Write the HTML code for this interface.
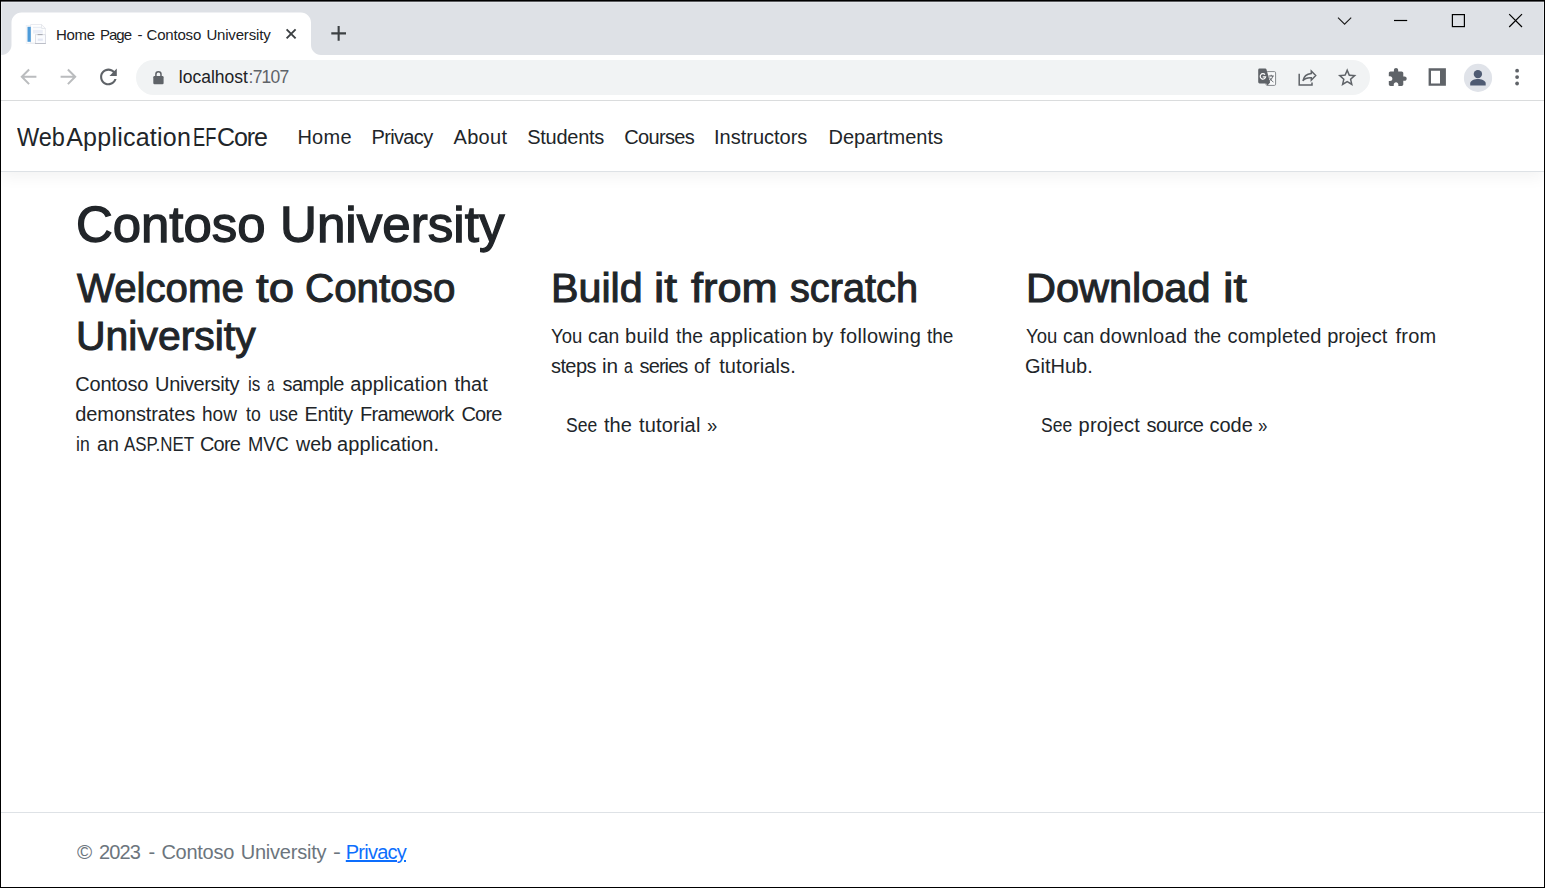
<!DOCTYPE html>
<html lang="en">
<head>
<meta charset="utf-8">
<title>Home Page - Contoso University</title>
<style>
html,body{margin:0;padding:0;}
body{width:1545px;height:888px;overflow:hidden;background:#fff;position:relative;font-family:"Liberation Sans",sans-serif;}
.abs{position:absolute;}
.t{position:absolute;white-space:nowrap;line-height:1;transform-origin:0 0;}
.H1{-webkit-text-stroke:1.3px #212529;}
.H2{-webkit-text-stroke:1px #212529;}
.U{text-decoration:underline;text-decoration-thickness:2px;text-underline-offset:1px;}
#frame{left:0;top:0;width:1545px;height:888px;box-sizing:border-box;border:1px solid #000;pointer-events:none;z-index:50;}
#top2{left:1px;top:1px;width:1543px;height:1px;background:#5b5c5f;z-index:51;}
#strip{left:1px;top:1px;width:1543px;height:54px;background:#dee1e6;box-sizing:border-box;border-top:2px solid #e5e8ec;border-left:1px solid #e8ebef;border-right:1px solid #e8ebef;}
#toolbar{left:1px;top:55px;width:1543px;height:45px;background:#fff;}
#tbline{left:1px;top:100px;width:1543px;height:1px;background:#dadcdd;}
#omni{left:136px;top:60px;width:1234px;height:35px;border-radius:17.5px;background:#f1f3f4;}
#navline{left:1px;top:171px;width:1543px;height:1px;background:#dee2e6;}
#navshadow{left:1px;top:101px;width:1543px;height:71px;box-shadow:0 5px 15px rgba(0,0,0,.05);}
#navbg{left:1px;top:101px;width:1543px;height:70px;background:#fff;}
#footline{left:1px;top:812px;width:1543px;height:1px;background:#dee2e6;}
</style>
</head>
<body>
<div class="abs" id="navshadow"></div>
<div class="abs" id="strip"></div>
<div class="abs" id="toolbar"></div>
<div class="abs" id="tbline"></div>
<div class="abs" id="omni"></div>
<div class="abs" id="navbg"></div>
<div class="abs" id="navline"></div>
<div class="abs" id="footline"></div>
<svg class="abs" style="left:0;top:0" width="1545" height="101" viewBox="0 0 1545 101">
<!-- tab -->
<path d="M1.5 55 C7 55 11.5 50.5 11.5 45 L11.5 22.5 C11.5 17 16 12.5 21.5 12.5 L301 12.5 C306.5 12.5 311 17 311 22.5 L311 45 C311 50.5 315.5 55 321 55 Z" fill="#fff"/>
<!-- favicon -->
<g>
<rect x="26.2" y="25.4" width="10" height="18" fill="#fafbfd" stroke="#eef0f4" stroke-width="0.8"/>
<path d="M30.6 24.5 H41.6 L45.4 28.4 V43.2 H30.6 Z" fill="#fefefe" stroke="#e4e6ec" stroke-width="0.8"/>
<path d="M41.6 24.5 V28.4 H45.4" fill="none" stroke="#dcdfe6" stroke-width="0.8"/>
<rect x="27.5" y="26.8" width="3.3" height="15" fill="#4d9bd9"/>
<rect x="33" y="26.8" width="8.2" height="1.4" fill="#e9edf5"/>
<rect x="33" y="29.8" width="9.8" height="3.8" fill="#ebeef7"/>
<rect x="35.4" y="34.7" width="10.1" height="8.7" fill="#fafbfe" stroke="#d6d9e1" stroke-width="0.8"/>
<rect x="37.6" y="34.2" width="5" height="0.9" fill="#9c9ea6"/>
<rect x="35" y="43" width="10.900" height="0.8" fill="#b4b7c1"/>
<rect x="37.8" y="38.6" width="5" height="2.2" fill="#e3e7f3"/>
</g>
<!-- tab close -->
<path d="M286.6 29.4 L295.6 38.4 M295.6 29.4 L286.6 38.4" stroke="#3c4043" stroke-width="1.9" fill="none"/>
<!-- new tab plus -->
<path d="M331.3 33.4 H346 M338.65 26 V40.8" stroke="#3c4043" stroke-width="2.1" fill="none"/>
<!-- window controls -->
<path d="M1338 17.6 L1344.6 24.2 L1351.2 17.6" stroke="#1a1a1a" stroke-width="1.1" fill="none"/>
<path d="M1394 20.5 H1407.2" stroke="#000" stroke-width="1.2" fill="none"/>
<rect x="1452.4" y="14.6" width="12" height="12" stroke="#000" stroke-width="1.2" fill="none"/>
<path d="M1509.2 14.2 L1522 27 M1522 14.2 L1509.2 27" stroke="#000" stroke-width="1.2" fill="none"/>
<!-- back -->
<g fill="#babcbe">
<path transform="translate(16.4,64.8)" d="M20 11H7.83l5.59-5.59L12 4l-8 8 8 8 1.41-1.41L7.83 13H20v-2z"/>
<path transform="translate(80.6,64.8) scale(-1,1)" d="M20 11H7.83l5.59-5.59L12 4l-8 8 8 8 1.41-1.41L7.83 13H20v-2z"/>
</g>
<!-- reload -->
<path transform="translate(95.9,64.4) scale(1.045)" fill="#5f6368" d="M17.65 6.35C16.2 4.9 14.21 4 12 4c-4.42 0-7.99 3.58-7.99 8s3.57 8 7.99 8c3.73 0 6.84-2.55 7.73-6h-2.08c-.82 2.33-3.04 4-5.65 4-3.31 0-6-2.69-6-6s2.69-6 6-6c1.66 0 3.14.69 4.22 1.78L13 11h7V4l-2.35 2.350z"/>
<!-- lock -->
<g>
<rect x="153.3" y="76" width="10.3" height="8.2" rx="1.2" fill="#5f6368"/>
<path d="M155.9 76.5 V74.3 a2.55 2.55 0 0 1 5.1 0 V76.5" stroke="#5f6368" stroke-width="1.5" fill="none"/>
</g>
<!-- translate -->
<g>
<rect x="1266" y="71.6" width="9.6" height="13.8" rx="1.2" fill="#f8f9fa" stroke="#85888c" stroke-width="1"/>
<path d="M1259.6 68.6 h5.6 a1.4 1.4 0 0 1 1.3 1 l3.6 13 l-2.6 3 l-1.2 -2.2 h-6.7 a1.4 1.4 0 0 1 -1.4 -1.4 v-12 a1.4 1.4 0 0 1 1.4 -1.4z" fill="#5f6368"/>
<path d="M1265 74.6 a2.7 2.7 0 1 0 0.6 2.2 h-2.9" stroke="#fff" stroke-width="1.2" fill="none"/>
<path d="M1268.6 76 h5.2 M1271.2 74.8 v1.2 M1272.8 76 c-0.6 2.6 -2.2 4.4 -4.2 5.6 M1269.6 77.6 c0.8 2 2.2 3.4 3.8 4.4" stroke="#5f6368" stroke-width="1" fill="none"/>
</g>
<!-- share -->
<g stroke="#5f6368" fill="none" stroke-width="1.5">
<path d="M1299.2 73.8 V84.9 H1312 V82.6"/>
<path d="M1311.3 71 L1315.7 75.600 L1311.300 80.200 V77.700 C1307.300 77.400 1304.600 78.600 1302.900 80.800 C1303.700 76.600 1306.300 74 1311.300 73.500 Z" stroke-linejoin="miter"/>
</g>
<!-- star -->
<path transform="translate(1336.1,66.5) scale(0.925)" fill="#5f6368" d="M22 9.240l-7.190-.620L12 2 9.190 8.630 2 9.240l5.460 4.730L5.820 21 12 17.270 18.180 21l-1.630-7.030L22 9.240zM12 15.400l-3.760 2.270 1-4.280-3.320-2.880 4.380-.380L12 6.100l1.710 4.040 4.380.380-3.320 2.880 1 4.280L12 15.400z"/>
<!-- puzzle -->
<path transform="translate(1387.1,67.15) scale(0.852)" fill="#5f6368" d="M20.5 11H19V7c0-1.1-.9-2-2-2h-4V3.500C13 2.120 11.880 1 10.500 1S8 2.120 8 3.500V5H4c-1.100 0-1.990.9-1.990 2v3.800H3.500c1.490 0 2.700 1.210 2.700 2.700s-1.210 2.700-2.700 2.700H2V20c0 1.100.9 2 2 2h3.800v-1.500c0-1.490 1.210-2.700 2.700-2.700 1.490 0 2.700 1.210 2.700 2.700V22H17c1.100 0 2-.9 2-2v-4h1.500c1.380 0 2.500-1.120 2.500-2.500S21.880 11 20.500 11z"/>
<!-- side panel -->
<path d="M1428.6 68.3 H1445.9 V85.8 H1428.6 Z M1431 70.7 V83.5 H1440 V70.7 Z" fill="#5f6368" fill-rule="evenodd"/>
<!-- avatar -->
<circle cx="1478" cy="77.9" r="14.1" fill="#e0e3e9"/>
<circle cx="1477.9" cy="74.1" r="4.2" fill="#4f5b73"/>
<path d="M1470.2 85.6 V83.4 C1470.2 80.4 1475 79 1477.9 79 C1480.800 79 1485.700 80.400 1485.700 83.400 V85.600 Z" fill="#4f5b73"/>
<!-- menu dots -->
<g fill="#5f6368"><circle cx="1517.100" cy="70.700" r="1.9"/><circle cx="1517.100" cy="77.100" r="1.9"/><circle cx="1517.100" cy="83.500" r="1.9"/></g>
</svg>
<!-- buttons -->

<div class="t" id="tab0" style="left:56.00px;top:26.90px;font-size:15px;color:#202124;letter-spacing:-0.300px;">Home</div>
<div class="t" id="tab1" style="left:100.00px;top:26.90px;font-size:15px;color:#202124;letter-spacing:-1.000px;">Page</div>
<div class="t" id="tab2" style="left:137.50px;top:26.90px;font-size:15px;color:#202124;letter-spacing:0.000px;">-</div>
<div class="t" id="tab3" style="left:146.60px;top:26.90px;font-size:15px;color:#202124;letter-spacing:-0.200px;">Contoso</div>
<div class="t" id="tab4" style="left:206.40px;top:26.90px;font-size:15px;color:#202124;letter-spacing:-0.178px;">University</div>
<div class="t" id="url1" style="left:178.80px;top:69.38px;font-size:17.5px;color:#202124;letter-spacing:0.000px;">localhost</div>
<div class="t" id="url2" style="left:248.60px;top:69.38px;font-size:17.5px;color:#5f6368;letter-spacing:-0.800px;">:7107</div>
<div class="t" id="br0" style="left:16.60px;top:124.53px;font-size:25px;color:#212529;letter-spacing:0.000px;transform:scaleX(0.9400);">Web</div>
<div class="t" id="br1" style="left:66.20px;top:124.53px;font-size:25px;color:#212529;letter-spacing:0.240px;">Application</div>
<div class="t" id="br2" style="left:192.50px;top:124.53px;font-size:25px;color:#212529;letter-spacing:0.000px;transform:scaleX(0.7300);">EF</div>
<div class="t" id="br3" style="left:217.00px;top:124.53px;font-size:25px;color:#212529;letter-spacing:-1.067px;">Core</div>
<div class="t" id="n0" style="left:297.40px;top:127.07px;font-size:20px;color:#212529;letter-spacing:0.267px;">Home</div>
<div class="t" id="n1" style="left:371.50px;top:127.07px;font-size:20px;color:#212529;letter-spacing:-0.650px;">Privacy</div>
<div class="t" id="n2" style="left:453.60px;top:127.07px;font-size:20px;color:#212529;letter-spacing:0.275px;">About</div>
<div class="t" id="n3" style="left:527.30px;top:127.07px;font-size:20px;color:#212529;letter-spacing:-0.286px;">Students</div>
<div class="t" id="n4" style="left:624.20px;top:127.07px;font-size:20px;color:#212529;letter-spacing:-0.633px;">Courses</div>
<div class="t" id="n5" style="left:714.00px;top:127.07px;font-size:20px;color:#212529;letter-spacing:0.000px;">Instructors</div>
<div class="t" id="n6" style="left:828.50px;top:127.07px;font-size:20px;color:#212529;letter-spacing:0.000px;">Departments</div>
<div class="t H1" id="h10" style="left:76.40px;top:200.24px;font-size:50.5px;color:#212529;letter-spacing:0.000px;transform:scaleX(1.0077);">Contoso</div>
<div class="t H1" id="h11" style="left:280.10px;top:200.24px;font-size:50.5px;color:#212529;letter-spacing:0.000px;transform:scaleX(1.0126);">University</div>
<div class="t H2" id="h2a0" style="left:76.60px;top:268.13px;font-size:40px;color:#212529;letter-spacing:0.000px;transform:scaleX(1.0046);">Welcome</div>
<div class="t H2" id="h2a1" style="left:256.10px;top:268.13px;font-size:40px;color:#212529;letter-spacing:0.000px;transform:scaleX(1.1386);">to</div>
<div class="t H2" id="h2a2" style="left:304.70px;top:268.13px;font-size:40px;color:#212529;letter-spacing:0.000px;transform:scaleX(1.0091);">Contoso</div>
<div class="t H2" id="h2a20" style="left:75.80px;top:316.13px;font-size:40px;color:#212529;letter-spacing:0.000px;transform:scaleX(1.0232);">University</div>
<div class="t H2" id="h2b0" style="left:550.80px;top:268.13px;font-size:40px;color:#212529;letter-spacing:0.000px;transform:scaleX(1.0308);">Build</div>
<div class="t H2" id="h2b1" style="left:654.00px;top:268.13px;font-size:40px;color:#212529;letter-spacing:0.000px;transform:scaleX(1.1506);">it</div>
<div class="t H2" id="h2b2" style="left:691.20px;top:268.13px;font-size:40px;color:#212529;letter-spacing:0.000px;transform:scaleX(1.0835);">from</div>
<div class="t H2" id="h2b3" style="left:789.50px;top:268.13px;font-size:40px;color:#212529;letter-spacing:0.000px;transform:scaleX(0.9925);">scratch</div>
<div class="t H2" id="h2c0" style="left:1026.00px;top:268.13px;font-size:40px;color:#212529;letter-spacing:0.000px;transform:scaleX(1.0372);">Download</div>
<div class="t H2" id="h2c1" style="left:1223.10px;top:268.13px;font-size:40px;color:#212529;letter-spacing:0.000px;transform:scaleX(1.1944);">it</div>
<div class="t" id="p1a0" style="left:75.30px;top:374.07px;font-size:20px;color:#212529;letter-spacing:-0.233px;">Contoso</div>
<div class="t" id="p1a1" style="left:155.10px;top:374.07px;font-size:20px;color:#212529;letter-spacing:-0.378px;">University</div>
<div class="t" id="p1a2" style="left:247.70px;top:374.07px;font-size:20px;color:#212529;letter-spacing:0.000px;transform:scaleX(0.8538);">is</div>
<div class="t" id="p1a3" style="left:266.90px;top:374.07px;font-size:20px;color:#212529;letter-spacing:0.000px;transform:scaleX(0.6627);">a</div>
<div class="t" id="p1a4" style="left:282.60px;top:374.07px;font-size:20px;color:#212529;letter-spacing:-0.560px;">sample</div>
<div class="t" id="p1a5" style="left:350.20px;top:374.07px;font-size:20px;color:#212529;letter-spacing:0.150px;">application</div>
<div class="t" id="p1a6" style="left:454.40px;top:374.07px;font-size:20px;color:#212529;letter-spacing:0.000px;">that</div>
<div class="t" id="p1b0" style="left:75.30px;top:404.07px;font-size:20px;color:#212529;letter-spacing:-0.109px;">demonstrates</div>
<div class="t" id="p1b1" style="left:202.20px;top:404.07px;font-size:20px;color:#212529;letter-spacing:0.000px;transform:scaleX(0.9528);">how</div>
<div class="t" id="p1b2" style="left:246.10px;top:404.07px;font-size:20px;color:#212529;letter-spacing:0.000px;transform:scaleX(0.8813);">to</div>
<div class="t" id="p1b3" style="left:268.50px;top:404.07px;font-size:20px;color:#212529;letter-spacing:0.000px;transform:scaleX(0.9032);">use</div>
<div class="t" id="p1b4" style="left:304.60px;top:404.07px;font-size:20px;color:#212529;letter-spacing:-0.340px;">Entity</div>
<div class="t" id="p1b5" style="left:360.10px;top:404.07px;font-size:20px;color:#212529;letter-spacing:-0.738px;">Framework</div>
<div class="t" id="p1b6" style="left:461.40px;top:404.07px;font-size:20px;color:#212529;letter-spacing:-0.767px;">Core</div>
<div class="t" id="p1c0" style="left:76.10px;top:434.07px;font-size:20px;color:#212529;letter-spacing:0.000px;transform:scaleX(0.8786);">in</div>
<div class="t" id="p1c1" style="left:97.20px;top:434.07px;font-size:20px;color:#212529;letter-spacing:0.000px;transform:scaleX(0.9826);">an</div>
<div class="t" id="p1c2" style="left:123.90px;top:434.07px;font-size:20px;color:#212529;letter-spacing:0.000px;transform:scaleX(0.8434);">ASP.NET</div>
<div class="t" id="p1c3" style="left:200.00px;top:434.07px;font-size:20px;color:#212529;letter-spacing:-0.833px;">Core</div>
<div class="t" id="p1c4" style="left:248.40px;top:434.07px;font-size:20px;color:#212529;letter-spacing:0.000px;transform:scaleX(0.9193);">MVC</div>
<div class="t" id="p1c5" style="left:296.20px;top:434.07px;font-size:20px;color:#212529;letter-spacing:0.000px;transform:scaleX(0.9806);">web</div>
<div class="t" id="p1c6" style="left:337.10px;top:434.07px;font-size:20px;color:#212529;letter-spacing:0.064px;">application.</div>
<div class="t" id="p2a0" style="left:551.00px;top:326.07px;font-size:20px;color:#212529;letter-spacing:0.000px;transform:scaleX(0.9242);">You</div>
<div class="t" id="p2a1" style="left:588.20px;top:326.07px;font-size:20px;color:#212529;letter-spacing:0.000px;transform:scaleX(0.9667);">can</div>
<div class="t" id="p2a2" style="left:625.10px;top:326.07px;font-size:20px;color:#212529;letter-spacing:0.350px;">build</div>
<div class="t" id="p2a3" style="left:676.10px;top:326.07px;font-size:20px;color:#212529;letter-spacing:0.000px;transform:scaleX(0.9679);">the</div>
<div class="t" id="p2a4" style="left:709.20px;top:326.07px;font-size:20px;color:#212529;letter-spacing:0.220px;">application</div>
<div class="t" id="p2a5" style="left:812.10px;top:326.07px;font-size:20px;color:#212529;letter-spacing:0.000px;">by</div>
<div class="t" id="p2a6" style="left:840.10px;top:326.07px;font-size:20px;color:#212529;letter-spacing:0.362px;">following</div>
<div class="t" id="p2a7" style="left:927.40px;top:326.07px;font-size:20px;color:#212529;letter-spacing:0.000px;transform:scaleX(0.9500);">the</div>
<div class="t" id="p2b0" style="left:551.00px;top:356.07px;font-size:20px;color:#212529;letter-spacing:-0.600px;">steps</div>
<div class="t" id="p2b1" style="left:601.80px;top:356.07px;font-size:20px;color:#212529;letter-spacing:0.000px;transform:scaleX(1.0367);">in</div>
<div class="t" id="p2b2" style="left:623.80px;top:356.07px;font-size:20px;color:#212529;letter-spacing:0.000px;transform:scaleX(0.7921);">a</div>
<div class="t" id="p2b3" style="left:639.60px;top:356.07px;font-size:20px;color:#212529;letter-spacing:-0.920px;">series</div>
<div class="t" id="p2b4" style="left:694.40px;top:356.07px;font-size:20px;color:#212529;letter-spacing:0.000px;transform:scaleX(0.9647);">of</div>
<div class="t" id="p2b5" style="left:719.20px;top:356.07px;font-size:20px;color:#212529;letter-spacing:0.111px;">tutorials.</div>
<div class="t" id="b20" style="left:566.30px;top:415.07px;font-size:20px;color:#212529;letter-spacing:0.000px;transform:scaleX(0.8765);">See</div>
<div class="t" id="b21" style="left:603.90px;top:415.07px;font-size:20px;color:#212529;letter-spacing:0.000px;transform:scaleX(1.0014);">the</div>
<div class="t" id="b22" style="left:639.00px;top:415.07px;font-size:20px;color:#212529;letter-spacing:0.186px;">tutorial</div>
<div class="t" id="b23" style="left:707.20px;top:415.07px;font-size:20px;color:#212529;letter-spacing:0.000px;transform:scaleX(0.9245);">&raquo;</div>
<div class="t" id="p3a0" style="left:1026.00px;top:326.07px;font-size:20px;color:#212529;letter-spacing:0.000px;transform:scaleX(0.9242);">You</div>
<div class="t" id="p3a1" style="left:1063.20px;top:326.07px;font-size:20px;color:#212529;letter-spacing:0.000px;transform:scaleX(0.9667);">can</div>
<div class="t" id="p3a2" style="left:1099.40px;top:326.07px;font-size:20px;color:#212529;letter-spacing:0.286px;">download</div>
<div class="t" id="p3a3" style="left:1193.80px;top:326.07px;font-size:20px;color:#212529;letter-spacing:0.000px;transform:scaleX(0.9786);">the</div>
<div class="t" id="p3a4" style="left:1227.60px;top:326.07px;font-size:20px;color:#212529;letter-spacing:0.188px;">completed</div>
<div class="t" id="p3a5" style="left:1327.20px;top:326.07px;font-size:20px;color:#212529;letter-spacing:0.000px;">project</div>
<div class="t" id="p3a6" style="left:1395.40px;top:326.07px;font-size:20px;color:#212529;letter-spacing:0.267px;">from</div>
<div class="t" id="p3b0" style="left:1025.00px;top:356.07px;font-size:20px;color:#212529;letter-spacing:0.000px;">GitHub.</div>
<div class="t" id="b30" style="left:1041.30px;top:415.07px;font-size:20px;color:#212529;letter-spacing:0.000px;transform:scaleX(0.8765);">See</div>
<div class="t" id="b31" style="left:1078.60px;top:415.07px;font-size:20px;color:#212529;letter-spacing:0.200px;">project</div>
<div class="t" id="b32" style="left:1146.60px;top:415.07px;font-size:20px;color:#212529;letter-spacing:-0.540px;">source</div>
<div class="t" id="b33" style="left:1209.40px;top:415.07px;font-size:20px;color:#212529;letter-spacing:0.000px;">code</div>
<div class="t" id="b34" style="left:1258.20px;top:415.07px;font-size:20px;color:#212529;letter-spacing:0.000px;transform:scaleX(0.8500);">&raquo;</div>
<div class="t" id="f0" style="left:77.10px;top:842.07px;font-size:20px;color:#6c757d;letter-spacing:0.000px;transform:scaleX(1.0314);">&copy;</div>
<div class="t" id="f1" style="left:99.00px;top:842.07px;font-size:20px;color:#6c757d;letter-spacing:-0.900px;">2023</div>
<div class="t" id="f2" style="left:148.60px;top:842.07px;font-size:20px;color:#6c757d;letter-spacing:0.000px;">-</div>
<div class="t" id="f3" style="left:161.40px;top:842.07px;font-size:20px;color:#6c757d;letter-spacing:-0.267px;">Contoso</div>
<div class="t" id="f4" style="left:240.70px;top:842.07px;font-size:20px;color:#6c757d;letter-spacing:-0.222px;">University</div>
<div class="t" id="f5" style="left:333.20px;top:842.07px;font-size:20px;color:#6c757d;letter-spacing:0.000px;transform:scaleX(1.1800);">-</div>
<div class="t U" id="fp" style="left:345.80px;top:842.07px;font-size:20px;color:#0d6efd;letter-spacing:-0.767px;">Privacy</div>
<div class="abs" id="top2"></div>
<div class="abs" id="frame"></div>
</body>
</html>
